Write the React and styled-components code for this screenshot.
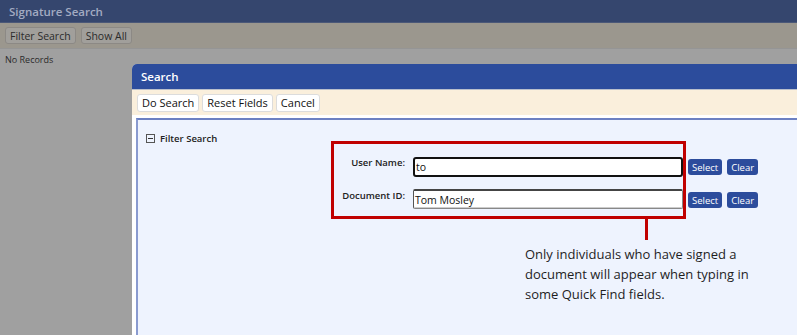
import React from "react";
import styled, { createGlobalStyle } from "styled-components";

const Global = createGlobalStyle`
  html, body { margin: 0; padding: 0; }
  body { font-family: "Open Sans", "Noto Sans", sans-serif; }
  #root { width: 797px; height: 335px; overflow: hidden; position: relative; }
`;

const Page = styled.div`
  width: 797px;
  height: 335px;
  display: flex;
  flex-direction: column;
  background: #a0a0a0;
  position: relative;
  overflow: hidden;
`;

const AppTitle = styled.div`
  height: 23px;
  background: #35466e;
  color: #a3abc2;
  font-size: 11.5px;
  font-weight: 600;
  display: flex;
  align-items: center;
  padding-left: 9px;
  border-bottom: 1px solid #4b5878;
  box-sizing: border-box;
`;

const AppToolbar = styled.div`
  height: 25px;
  background: #9b978e;
  display: flex;
  align-items: center;
  gap: 5px;
  padding-left: 5px;
`;

const DimButton = styled.div`
  height: 17px;
  padding: 0 4px;
  border: 1px solid #8c8985;
  border-radius: 3px;
  background: #a19f9b;
  color: #2b2b2b;
  font-size: 10.5px;
  display: flex;
  align-items: center;
  box-sizing: border-box;
`;

const AppBody = styled.div`
  flex: 1;
  padding: 4px 5px;
  font-size: 9px;
  color: #2b2b2b;
  border-top: 1px solid #959595;
`;

const Dialog = styled.div`
  position: absolute;
  left: 132px;
  top: 64px;
  width: 690px;
  height: 300px;
  display: flex;
  flex-direction: column;
  background: #f4f4f4;
  border-top-left-radius: 5px;
  overflow: hidden;
`;

const DialogTitle = styled.div`
  height: 25px;
  background: #2c4c9c;
  color: #ffffff;
  font-size: 11.5px;
  font-weight: 600;
  display: flex;
  align-items: center;
  padding-left: 9px;
  border-bottom: 1px solid #b9bfcc;
  box-sizing: content-box;
`;

const DialogToolbar = styled.div`
  height: 25px;
  background: #faefdc;
  display: flex;
  align-items: center;
  gap: 3px;
  padding-left: 5px;
`;

const ToolButton = styled.button`
  height: 18px;
  padding: 0 4px;
  border: 1px solid #dcdcdc;
  border-radius: 3px;
  background: #ffffff;
  color: #111;
  font-family: inherit;
  font-size: 11px;
  display: flex;
  align-items: center;
  box-sizing: border-box;
  cursor: pointer;
`;

const DialogBody = styled.div`
  flex: 1;
  background: #ffffff;
  padding: 3px 0 0 4px;
  display: flex;
`;

const Panel = styled.div`
  flex: 1;
  background: #eef3fe;
  border-top: 2px solid #6c80c2;
  border-left: 2px solid #8a9bd0;
  position: relative;
  padding: 12px 0 0 8px;
`;

const SectionHeader = styled.div`
  display: flex;
  align-items: center;
  gap: 5px;
  font-size: 9.5px;
  font-weight: 600;
  color: #222;
`;

const Toggle = styled.span`
  width: 7px;
  height: 7px;
  border: 1px solid #555;
  position: relative;
  box-sizing: content-box;
  &::after {
    content: "";
    position: absolute;
    left: 1px;
    right: 1px;
    top: 3px;
    height: 1px;
    background: #333;
  }
`;

const Form = styled.div`
  margin: 12px 0 0 186px;
  display: grid;
  grid-template-columns: 76px 270px auto auto;
  justify-content: start;
  column-gap: 5px;
  row-gap: 12px;
  align-items: start;
`;

const Label = styled.label`
  font-size: 9.5px;
  line-height: 11px;
  font-weight: 600;
  color: #222;
  text-align: right;
  padding-right: 3px;
  padding-top: ${(p) => p.$top}px;
`;

const Input = styled.div`
  height: 20px;
  box-sizing: border-box;
  background: #fff;
  display: flex;
  align-items: center;
  padding-left: 1px;
  font-size: 10.5px;
  color: #111;
  border-radius: ${(p) => (p.$focused ? "3px" : "2px")};
  border: ${(p) => (p.$focused ? "2px solid #111" : "1px solid #888")};
  ${(p) =>
    !p.$focused &&
    `border-top: 2px solid #444; border-left: 1px solid #555; box-shadow: inset 0 -1px 0 #ccc;`}
`;

const SmallButton = styled.button`
  height: 16px;
  margin-top: ${(p) => p.$mt}px;
  padding: 0 4px;
  border: none;
  border-radius: 3px;
  background: #2c4c9c;
  color: #fff;
  font-family: inherit;
  font-size: 9.5px;
  display: flex;
  align-items: center;
  cursor: pointer;
`;

const Callout = styled.div`
  position: absolute;
  left: 193px;
  top: 21px;
  width: 355px;
  height: 78px;
  border: 3px solid #c00000;
  box-sizing: border-box;
  pointer-events: none;
`;

const Connector = styled.div`
  position: absolute;
  left: 507px;
  top: 99px;
  width: 3px;
  height: 21px;
  background: #c00000;
`;

const Note = styled.div`
  position: absolute;
  left: 387px;
  top: 124px;
  width: 240px;
  font-size: 13px;
  line-height: 20px;
  color: #1e1e1e;
`;

export default function App() {
  return (
    <>
      <Global />
      <Page>
        <AppTitle>Signature Search</AppTitle>
        <AppToolbar>
          <DimButton>Filter Search</DimButton>
          <DimButton>Show All</DimButton>
        </AppToolbar>
        <AppBody>No Records</AppBody>
        <Dialog>
          <DialogTitle>Search</DialogTitle>
          <DialogToolbar>
            <ToolButton>Do Search</ToolButton>
            <ToolButton>Reset Fields</ToolButton>
            <ToolButton>Cancel</ToolButton>
          </DialogToolbar>
          <DialogBody>
            <Panel>
              <SectionHeader>
                <Toggle />
                Filter Search
              </SectionHeader>
              <Form>
                <Label $top={0}>User Name:</Label>
                <Input $focused>to</Input>
                <SmallButton $mt={2}>Select</SmallButton>
                <SmallButton $mt={2}>Clear</SmallButton>
                <Label $top={1}>Document ID:</Label>
                <Input>Tom Mosley</Input>
                <SmallButton $mt={3}>Select</SmallButton>
                <SmallButton $mt={3}>Clear</SmallButton>
              </Form>
              <Callout />
              <Connector />
              <Note>
                Only individuals who have signed a document will appear when
                typing in some Quick Find fields.
              </Note>
            </Panel>
          </DialogBody>
        </Dialog>
      </Page>
    </>
  );
}
